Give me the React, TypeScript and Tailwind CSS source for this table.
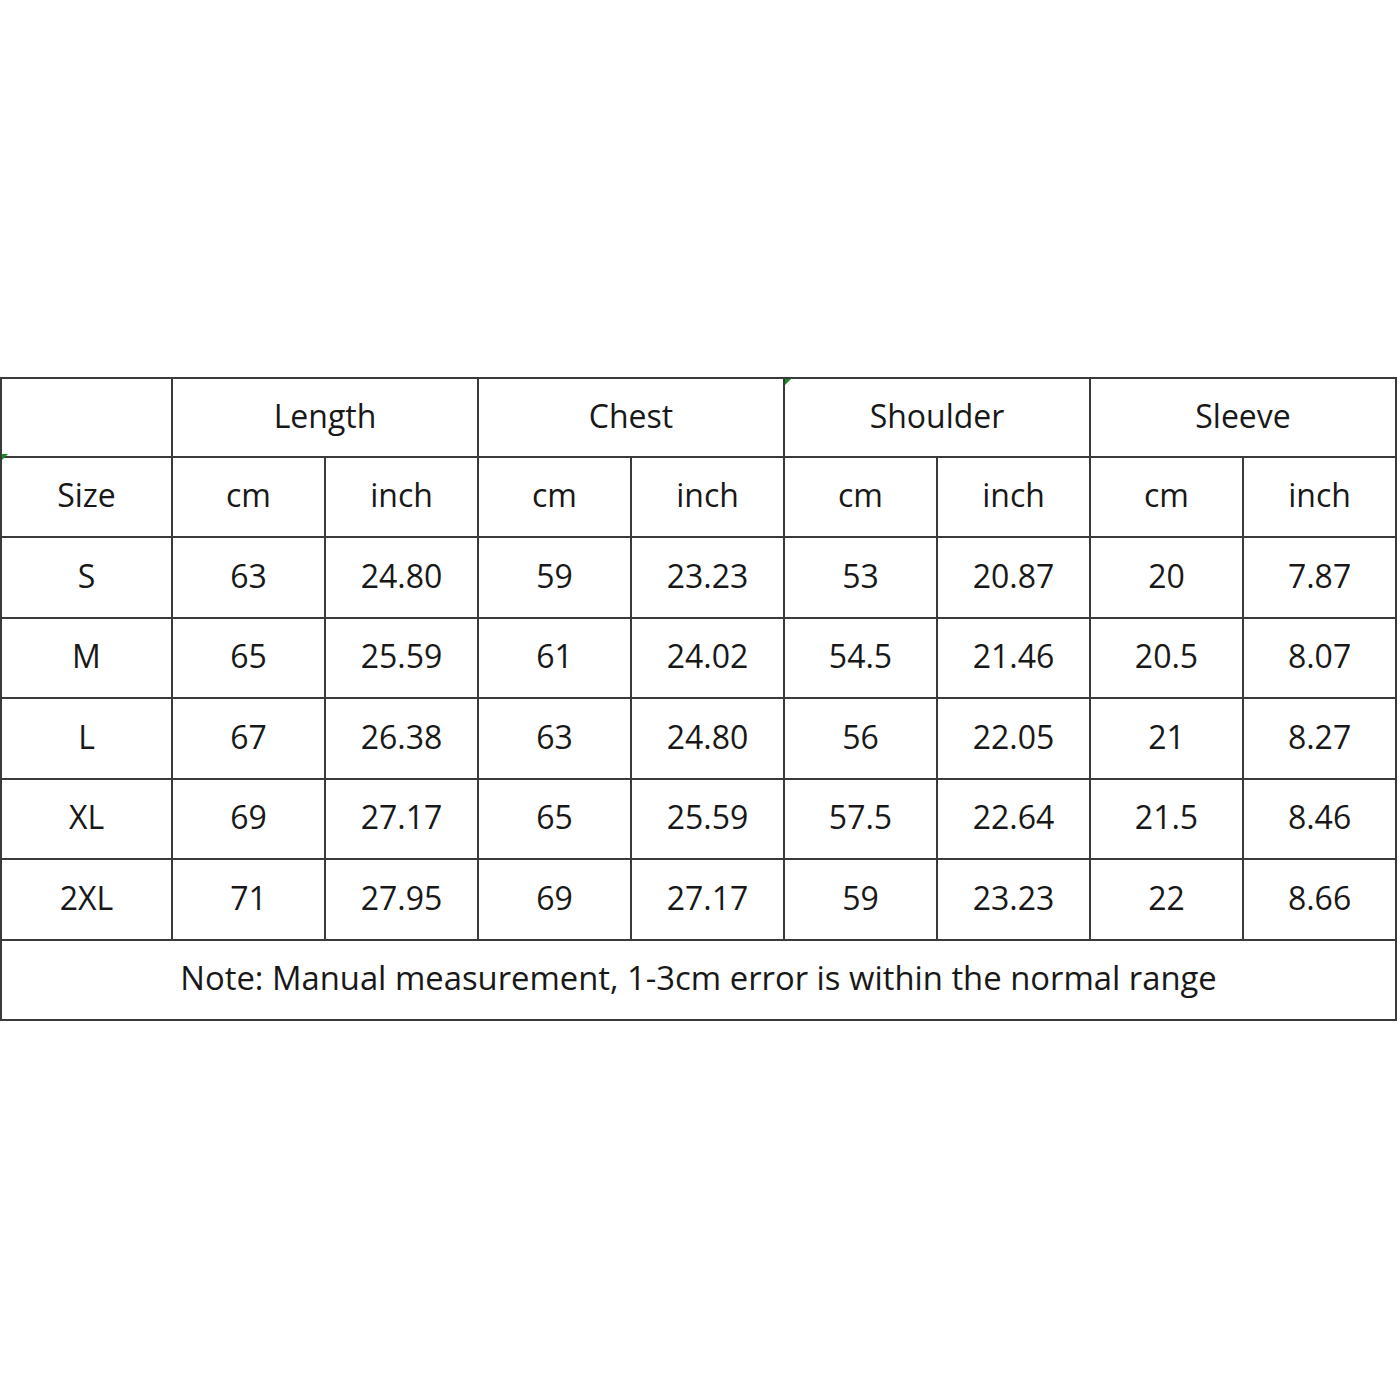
import React from "react";

const rows = [
  ["S", "63", "24.80", "59", "23.23", "53", "20.87", "20", "7.87"],
  ["M", "65", "25.59", "61", "24.02", "54.5", "21.46", "20.5", "8.07"],
  ["L", "67", "26.38", "63", "24.80", "56", "22.05", "21", "8.27"],
  ["XL", "69", "27.17", "65", "25.59", "57.5", "22.64", "21.5", "8.46"],
  ["2XL", "71", "27.95", "69", "27.17", "59", "23.23", "22", "8.66"],
];

const cell = "border-2 border-[#3a3a3a] text-center align-middle p-0 pb-[3px]";

export default function App() {
  return (
    <div className="w-[1400px] h-[1400px] bg-white pt-[377px] text-[#181818] text-[32px] leading-none" style={{ fontFamily: '"Open Sans", "Noto Sans", sans-serif' }}>
      <table className="border-collapse table-fixed w-[1397px] relative">
        <colgroup>
          <col className="w-[171px]" />
          {Array.from({ length: 8 }).map((_, i) => (
            <col key={i} className="w-[153px]" />
          ))}
        </colgroup>
        <tbody>
          <tr className="h-[78.5px]">
            <td className={`${cell} relative`}>
              <span className="absolute left-0 bottom-[-4px] w-0 h-0 border-l-[6px] border-l-[#1a8a2a] border-b-[6px] border-b-transparent"></span>
            </td>
            <td className={cell} colSpan={2}>Length</td>
            <td className={cell} colSpan={2}>Chest</td>
            <td className={`${cell} relative`} colSpan={2}>
              <span className="absolute left-0 top-0 w-0 h-0 border-l-[6px] border-l-[#1a8a2a] border-b-[6px] border-b-transparent"></span>
              Shoulder
            </td>
            <td className={cell} colSpan={2}>Sleeve</td>
          </tr>
          <tr className="h-[80.5px]">
            <td className={cell}>Size</td>
            {["cm", "inch", "cm", "inch", "cm", "inch", "cm", "inch"].map((t, i) => (
              <td key={i} className={cell}>{t}</td>
            ))}
          </tr>
          {rows.map((r, i) => (
            <tr key={i} className="h-[80.5px]">
              {r.map((t, j) => (
                <td key={j} className={cell}>{t}</td>
              ))}
            </tr>
          ))}
          <tr className="h-[80.5px]">
            <td className={`${cell} text-[32.8px]`} colSpan={9}>
              Note: Manual measurement, 1-3cm error is within the normal range
            </td>
          </tr>
        </tbody>
      </table>
    </div>
  );
}
